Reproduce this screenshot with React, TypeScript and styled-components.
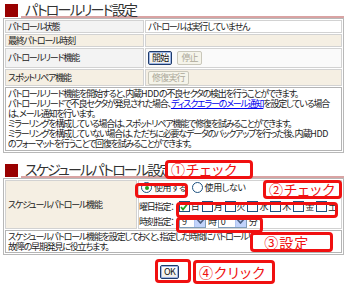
import React from "react";
import styled, { createGlobalStyle } from "styled-components";

const GlobalStyle = createGlobalStyle`
  html, body {
    margin: 0;
    padding: 0;
    background: #fff;
  }
  body {
    font-family: "Noto Sans CJK JP", "Noto Sans", sans-serif;
    font-size: 9px;
    color: #222;
  }
`;

const Page = styled.div`
  position: relative;
  width: 350px;
  height: 289px;
  padding: 2px 6px 0 3px;
  box-sizing: border-box;
  overflow: hidden;
  font-feature-settings: "palt";
`;

const SectionTitle = styled.div<{ $top: number }>`
  display: flex;
  align-items: flex-end;
  height: 16px;
  margin: ${(p) => p.$top}px 0 0 2px;
`;

const TitleMark = styled.span`
  flex: none;
  width: 13px;
  height: 13px;
  margin-bottom: 1px;
  background: #990000;
`;

const TitleText = styled.h2`
  flex: 1;
  margin: 0 0 0 3px;
  padding-left: 4px;
  height: 14px;
  font-size: 14px;
  line-height: 14px;
  font-weight: normal;
  color: #333;
  letter-spacing: -1.8px;
  white-space: nowrap;
  border-bottom: 2px solid #d9a3a3;
`;

const Grid = styled.table`
  width: 341px;
  border: 1px solid #b8b8b8;
  border-collapse: separate;
  border-spacing: 1px;
  table-layout: fixed;
  font-size: 9px;
  letter-spacing: -1.2px;
`;

const Label = styled.td<{ $alt?: boolean; $h: number; $w: number }>`
  width: ${(p) => p.$w}px;
  height: ${(p) => p.$h}px;
  padding: 0 2px;
  border: 1px solid #d2d2d2;
  background: ${(p) => (p.$alt ? "#f5efe3" : "#f3f3f3")};
  white-space: nowrap;
  vertical-align: middle;
  line-height: 10px;
`;

const Value = styled.td<{ $alt?: boolean; $plain?: boolean; $tight?: boolean }>`
  padding: 0 2px 0 ${(p) => (p.$tight ? 0 : 2)}px;
  border: 1px solid #d2d2d2;
  background: ${(p) => (p.$plain ? "#fff" : p.$alt ? "#f5efe3" : "#fafafa")};
  white-space: nowrap;
  vertical-align: middle;
  line-height: 10px;
`;

const Note = styled.td<{ $lh: number }>`
  padding: 1px 2px;
  border: 1px solid #b4b4b4;
  background: #fff;
  line-height: ${(p) => p.$lh}px;
  white-space: nowrap;
  overflow: hidden;
`;

const Latin = styled.span`
  letter-spacing: -0.3px;
`;

const NoteLink = styled.a`
  color: #0000ee;
  text-decoration: underline;
`;

const Btn = styled.button<{ $disabled?: boolean; $focus?: boolean }>`
  height: 14px;
  margin: 0 5px 0 0;
  padding: 0 3px;
  font-family: inherit;
  font-size: 9px;
  line-height: 10px;
  letter-spacing: -0.8px;
  border-radius: 2px;
  border: 1px solid ${(p) => (p.$disabled ? "#c9c7ba" : "#1d3a6c")};
  color: ${(p) => (p.$disabled ? "#aca899" : "#111")};
  background: ${(p) =>
    p.$disabled ? "#f5f4ea" : "linear-gradient(#ffffff, #ecebe6)"};
  box-shadow: ${(p) => (p.$focus ? "inset 0 0 0 1px #9fb7e4" : "none")};
`;

const ControlRow = styled.div<{ $gap: number }>`
  display: flex;
  align-items: center;
  height: 13px;
  margin-top: ${(p) => p.$gap}px;
`;

const Option = styled.span`
  display: inline-flex;
  align-items: center;
  gap: 2px;
  margin: 0 3px 0 2px;
  letter-spacing: -0.4px;
`;

const Radio = styled.span<{ $on?: boolean }>`
  position: relative;
  display: inline-block;
  width: 9px;
  height: 9px;
  border: 1px solid #1c5180;
  border-radius: 50%;
  background: #fff;
  &::after {
    content: "";
    display: ${(p) => (p.$on ? "block" : "none")};
    position: absolute;
    left: 2.5px;
    top: 2.5px;
    width: 4px;
    height: 4px;
    border-radius: 50%;
    background: #21a121;
  }
`;

const Check = styled.span`
  display: inline-flex;
  align-items: center;
  justify-content: center;
  width: 9px;
  height: 9px;
  border: 1px solid #1c5180;
  background: #fff;
`;

const Day = styled.span`
  display: inline-flex;
  align-items: center;
  gap: 1px;
  width: 23px;
`;

const Caption = styled.span`
  width: 40px;
`;

const Select = styled.span<{ $w: number }>`
  display: inline-flex;
  justify-content: space-between;
  align-items: stretch;
  width: ${(p) => p.$w}px;
  height: 12px;
  border: 1px solid #7f9db9;
  background: #fff;
  box-sizing: border-box;
  padding-left: 2px;
  line-height: 10px;
`;

const SelectArrow = styled.span`
  display: inline-flex;
  align-items: center;
  justify-content: center;
  width: 10px;
  background: #c1d3fb;
  border-left: 1px solid #b0c6f2;
`;

const Unit = styled.span`
  margin: 0 2px;
`;

const Footer = styled.div`
  display: flex;
  justify-content: center;
  padding: 10px 3px 0 0;
`;

const Callout = styled.div<{ $x: number; $y: number; $w: number; $h: number; $label?: boolean }>`
  position: absolute;
  left: ${(p) => p.$x}px;
  top: ${(p) => p.$y}px;
  width: ${(p) => p.$w}px;
  height: ${(p) => p.$h}px;
  box-sizing: border-box;
  border: 3px solid #f01010;
  border-radius: 4px;
  background: ${(p) => (p.$label ? "#fff" : "transparent")};
  color: #f01010;
  font-size: 14px;
  line-height: ${(p) => p.$h - 6}px;
  letter-spacing: 1px;
  padding-left: 3px;
  white-space: nowrap;
`;

const ArrowDown = () => (
  <svg width="7" height="5" viewBox="0 0 7 5">
    <path d="M0.5 0.5 L3.5 4 L6.5 0.5" fill="none" stroke="#4d6185" strokeWidth="1.6" />
  </svg>
);

const Tick = () => (
  <svg width="8" height="8" viewBox="0 0 8 8">
    <path d="M1 4 L3 6.5 L7 1.5" fill="none" stroke="#21a121" strokeWidth="1.8" />
  </svg>
);

const days = ["日", "月", "火", "水", "木", "金", "土"];

export default function App() {
  return (
    <Page>
      <GlobalStyle />
      <SectionTitle $top={0}>
        <TitleMark />
        <TitleText>パトロールリード設定</TitleText>
      </SectionTitle>
      <Grid>
        <tbody>
          <tr>
            <Label $h={11} $w={133}>パトロール状態</Label>
            <Value $plain>パトロールは実行していません</Value>
          </tr>
          <tr>
            <Label $h={11} $w={133} $alt>最終パトロール時刻</Label>
            <Value $alt />
          </tr>
          <tr>
            <Label $h={18} $w={133}>パトロールリード機能</Label>
            <Value>
              <Btn $focus>開始</Btn>
              <Btn $disabled>停止</Btn>
            </Value>
          </tr>
          <tr>
            <Label $h={15} $w={133} $alt>スポットリペア機能</Label>
            <Value $alt>
              <Btn $disabled>修復実行</Btn>
            </Value>
          </tr>
          <tr>
            <Note colSpan={2} $lh={10}>
              パトロールリード機能を開始すると、内蔵<Latin>HDD</Latin>の不良セクタの検出を行うことができます。
              <br />
              パトロールリードで不良セクタが発見された場合、
              <NoteLink href="#">ディスクエラーのメール通知</NoteLink>を設定している場合
              <br />
              は、メール通知を行います。
              <br />
              ミラーリングを構成している場合は、スポットリペア機能で修復を試みることができます。
              <br />
              ミラーリングを構成していない場合は、ただちに必要なデータのバックアップを行った後、内蔵<Latin>HDD</Latin>
              <br />
              のフォーマットを行うことで回復を試みることができます。
            </Note>
          </tr>
        </tbody>
      </Grid>

      <SectionTitle $top={9}>
        <TitleMark />
        <TitleText>スケジュールパトロール設定</TitleText>
      </SectionTitle>
      <Grid>
        <tbody>
          <tr>
            <Label $h={46} $w={126} $alt>スケジュールパトロール機能</Label>
            <Value $plain $tight>
              <ControlRow $gap={0}>
                <Option>
                  <Radio $on />
                  使用する
                </Option>
                <Option>
                  <Radio />
                  使用しない
                </Option>
              </ControlRow>
              <ControlRow $gap={6}>
                <Caption>曜日指定：</Caption>
                {days.map((d, i) => (
                  <Day key={d}>
                    <Check>{i === 0 && <Tick />}</Check>
                    {d}
                  </Day>
                ))}
              </ControlRow>
              <ControlRow $gap={2}>
                <Caption>時刻指定：</Caption>
                <Select $w={27}>
                  9
                  <SelectArrow>
                    <ArrowDown />
                  </SelectArrow>
                </Select>
                <Unit>時</Unit>
                <Select $w={29}>
                  0
                  <SelectArrow>
                    <ArrowDown />
                  </SelectArrow>
                </Select>
                <Unit>分</Unit>
              </ControlRow>
            </Value>
          </tr>
          <tr>
            <Note colSpan={2} $lh={9.5}>
              スケジュールパトロール機能を設定しておくと、指定した時間にパトロールリードを行うので、
              <br />
              故障の早期発見に役立ちます。
            </Note>
          </tr>
        </tbody>
      </Grid>

      <Footer>
        <Btn $focus>OK</Btn>
      </Footer>

      <Callout $x={135} $y={183} $w={53} $h={15} />
      <Callout $x={176} $y={202} $w={162} $h={16} />
      <Callout $x={176} $y={217} $w={87} $h={16} />
      <Callout $x={155} $y={259} $w={36} $h={24} />
      <Callout $x={165} $y={160} $w={88} $h={19} $label>
        ①チェック
      </Callout>
      <Callout $x={263} $y={180} $w={79} $h={19} $label>
        ②チェック
      </Callout>
      <Callout $x={250} $y={232} $w={83} $h={20} $label>
        &nbsp;&nbsp;③設定
      </Callout>
      <Callout $x={193} $y={260} $w={82} $h={24} $label>
        ④クリック
      </Callout>
    </Page>
  );
}
